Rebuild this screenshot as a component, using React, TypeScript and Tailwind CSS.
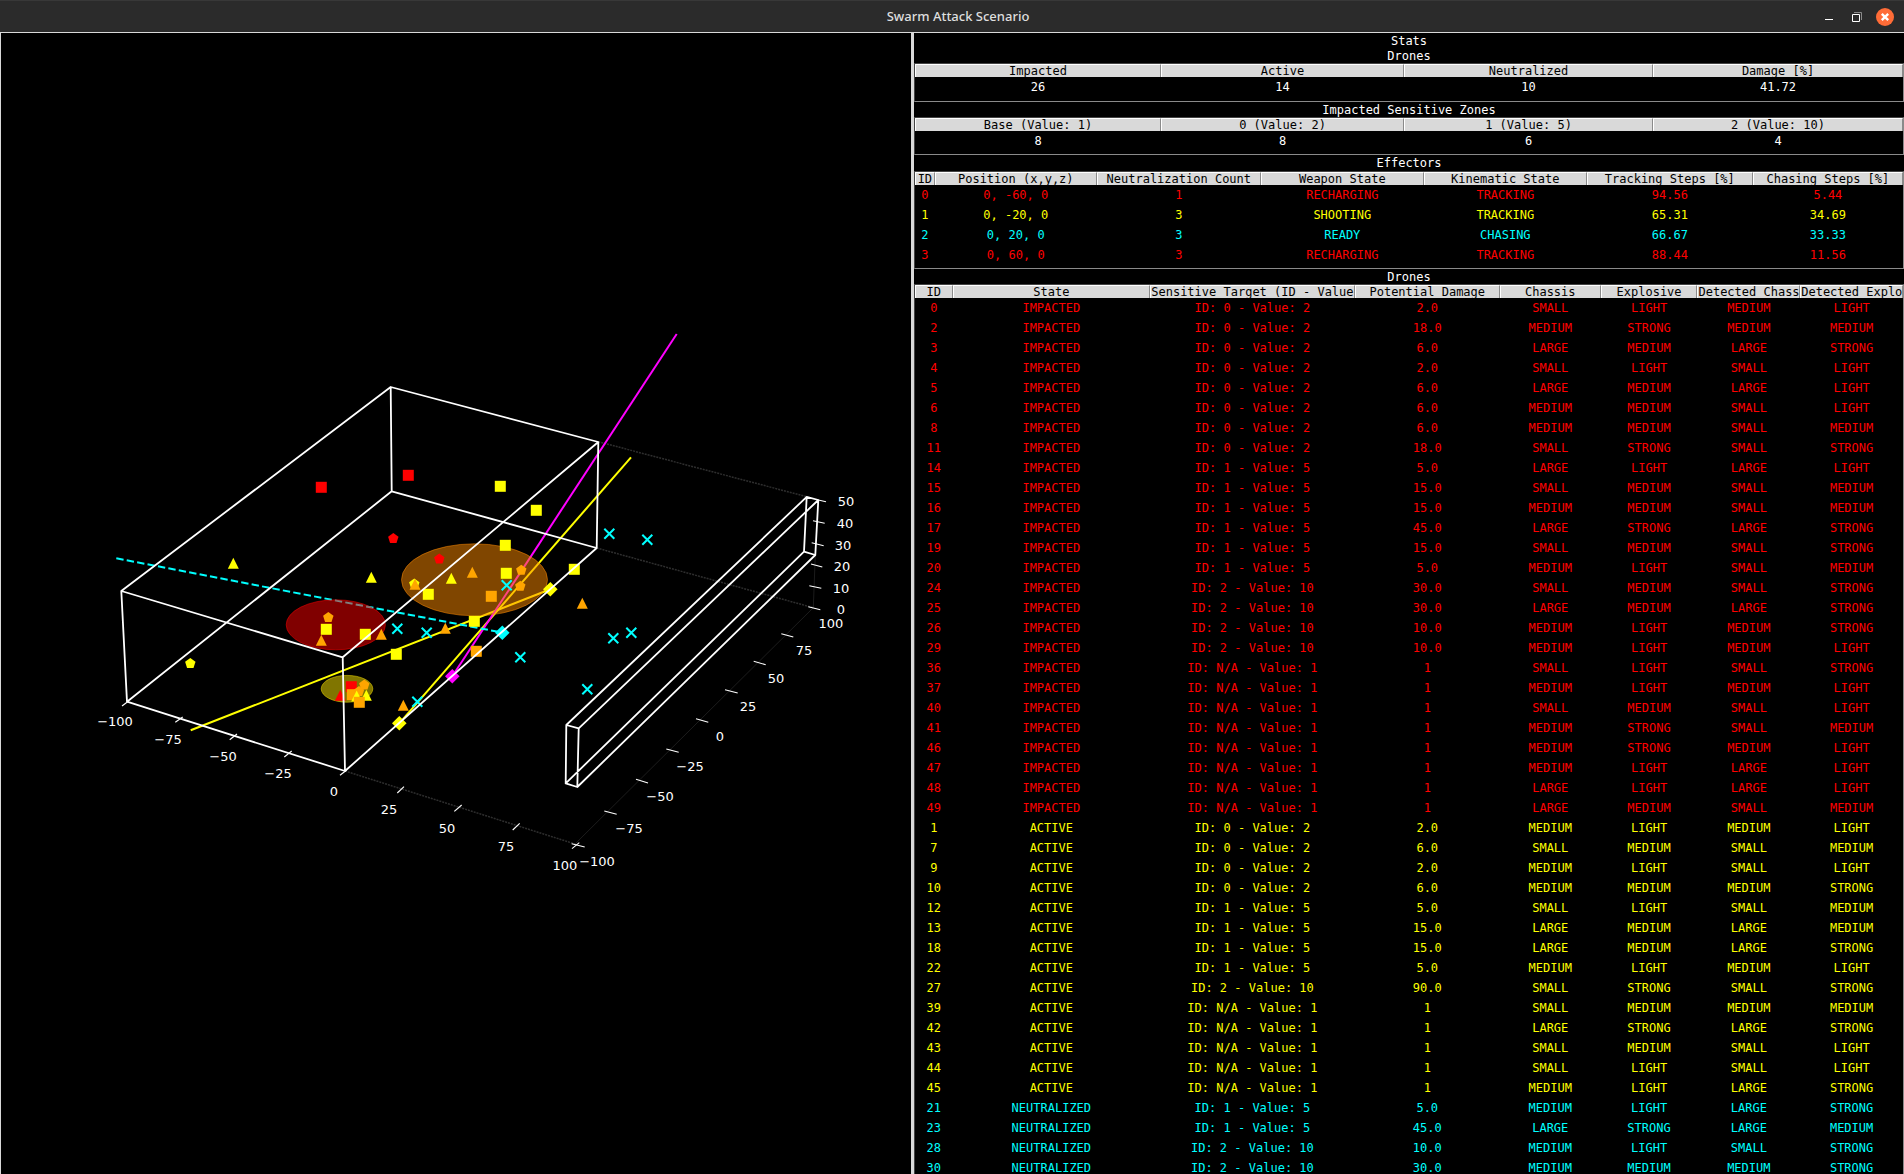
import clsx from "clsx";

type Point = [number, number];

const markerColors = {
  red: "#ff0000",
  yellow: "#ffff00",
  orange: "#ffa500",
  cyan: "#00ffff",
  magenta: "#ff00ff",
};

type MarkerColor = keyof typeof markerColors;
type Shape = "square" | "triangle" | "pentagon" | "diamond" | "cross";

const shapePaths: Record<Shape, string> = {
  square: "M-5.5 -5.5H5.5V5.5H-5.5Z",
  triangle: "M0 -5.5L5.5 5.5H-5.5Z",
  pentagon: "M0 -5.3L5.2 -1.5L3.2 4.8H-3.2L-5.2 -1.5Z",
  diamond: "M0 -7.3L7.3 0L0 7.3L-7.3 0Z",
  cross: "M-5 -5L5 5M-5 5L5 -5",
};

const markers: [Shape, MarkerColor, number, number][] = [
  ["square", "red", 321.3, 487.3],
  ["square", "red", 408.3, 475.3],
  ["square", "yellow", 500.3, 486.3],
  ["square", "yellow", 536.3, 510.3],
  ["square", "yellow", 505.3, 545.3],
  ["square", "yellow", 506.3, 573.3],
  ["square", "yellow", 574.3, 569.3],
  ["square", "yellow", 428.3, 594.3],
  ["square", "orange", 491.3, 596.3],
  ["square", "yellow", 474.3, 621.3],
  ["square", "yellow", 326.3, 629.3],
  ["square", "yellow", 365.3, 634.3],
  ["square", "yellow", 396.3, 654.3],
  ["square", "orange", 476.3, 651.3],
  ["square", "red", 351.3, 686.7],
  ["square", "orange", 352.3, 694.7],
  ["pentagon", "orange", 364.3, 684.7],
  ["pentagon", "orange", 359, 691.3],
  ["pentagon", "red", 393.3, 538.3],
  ["pentagon", "red", 439.3, 558.7],
  ["pentagon", "orange", 521.3, 570],
  ["pentagon", "orange", 520.3, 586],
  ["pentagon", "yellow", 414.3, 583.7],
  ["pentagon", "orange", 328.3, 617.3],
  ["pentagon", "yellow", 190.3, 663.3],
  ["triangle", "yellow", 233.3, 563.3],
  ["triangle", "yellow", 371.3, 577.3],
  ["triangle", "yellow", 451.3, 578.3],
  ["triangle", "orange", 472.3, 572.3],
  ["triangle", "orange", 415, 584.3],
  ["triangle", "orange", 582.3, 603.3],
  ["triangle", "orange", 321.3, 640.3],
  ["triangle", "orange", 381.3, 634.3],
  ["triangle", "orange", 445.3, 628.3],
  ["triangle", "red", 340.3, 695.3],
  ["triangle", "yellow", 356.7, 696],
  ["triangle", "yellow", 366.3, 695.3],
  ["triangle", "orange", 403.3, 705.3],
  ["square", "orange", 359.3, 702.3],
  ["diamond", "yellow", 550.3, 589.3],
  ["diamond", "cyan", 502.3, 632.7],
  ["diamond", "magenta", 452.3, 676.3],
  ["diamond", "yellow", 399.3, 723.3],
  ["cross", "cyan", 609.3, 533.7],
  ["cross", "cyan", 647.3, 539.7],
  ["cross", "cyan", 506.7, 585.3],
  ["cross", "cyan", 397.3, 628.7],
  ["cross", "cyan", 426.7, 632.7],
  ["cross", "cyan", 520.3, 657.3],
  ["cross", "cyan", 587.3, 689.3],
  ["cross", "cyan", 417.3, 701.7],
  ["cross", "cyan", 613.3, 638.3],
  ["cross", "cyan", 631.3, 632.7],
];

// corners: top ring then bottom ring, same winding
const threatBox: Point[] = [
  [390.7, 387], [598.3, 442], [342.7, 657.3], [121.3, 591],
  [391.7, 491.3], [596.7, 548], [345, 771], [127, 701.7],
];
const launchBox: Point[] = [
  [806.7, 496.9], [818.3, 500], [578.7, 728.3], [566.3, 725],
  [804, 551.7], [815.3, 555], [577.3, 787], [565.7, 783.3],
];

const ticks: [number, number, number, number][] = [
  [122, 706, 128.7, 701], [175.3, 722.3, 182.7, 717], [229.7, 739.7, 237, 734],
  [284.3, 757, 291.7, 751], [340, 775.3, 346.7, 770], [397.3, 793, 404, 786.7],
  [454.3, 811.3, 461.7, 805], [512.7, 830, 519.7, 823.3], [572, 848.7, 579.3, 842.7],
  [571.7, 843.7, 584.7, 847], [604.3, 811, 616.7, 814.3], [636, 779.3, 648, 783],
  [666.3, 749, 678.7, 752.3], [696, 718.7, 708.3, 722.3], [725, 689.7, 737.7, 693],
  [753.7, 661.3, 765.7, 664.7], [781.3, 633.7, 793.3, 637], [808.3, 606.7, 820.3, 609.7],
  [809.3, 585.7, 821.3, 588.3], [811, 564, 822.3, 567], [811.7, 542.7, 823.7, 545.7],
  [813, 520.7, 824.7, 523.3], [818.3, 500, 826, 501.7],
];

const tickLabels: [string, number, number][] = [
  ["−100", 115, 726], ["−75", 168, 744], ["−50", 223, 761], ["−25", 278, 778],
  ["0", 334, 796], ["25", 389, 814], ["50", 447, 833], ["75", 506, 851], ["100", 565, 870],
  ["−100", 597, 866], ["−75", 629, 833], ["−50", 660, 801], ["−25", 690, 771],
  ["0", 720, 741], ["25", 748, 711], ["50", 776, 683], ["75", 804, 655], ["100", 831, 628],
  ["0", 841, 614], ["10", 841, 593], ["20", 842, 571], ["30", 843, 550],
  ["40", 845, 528], ["50", 846, 506],
];

function boxPath(c: Point[]) {
  const ring = (p: Point[]) => "M" + p.map((v) => v.join(" ")).join("L") + "Z";
  const pillars = [0, 1, 2, 3].map((i) => `M${c[i].join(" ")}L${c[i + 4].join(" ")}`).join("");
  return ring(c.slice(0, 4)) + ring(c.slice(4)) + pillars;
}

function ScenarioPlot() {
  return (
    <svg
      viewBox="1 33 910 1141"
      className="h-full w-full"
      role="img"
      aria-label="Swarm attack scenario"
      fill="none"
    >
      <g stroke="#2e2e2e" strokeWidth="1.5" strokeDasharray="2 1">
        <path d="M598.3 441.7L806.7 496.7" />
        <path d="M596.7 548L813.3 607.7" />
        <path d="M345 771L575 844" />
      </g>
      <path d="M575 844L813.3 607.7L815.3 555" stroke="#1c1c1c" />
      <g strokeWidth="2">
        <path d="M190.7 730.3L550.3 589.3" stroke="#ffff00" />
        <path d="M631 457.3L399.3 723.3" stroke="#ffff00" />
        <path d="M676.7 334L452.3 676.3" stroke="#ff00ff" />
        <path d="M116.3 558.3L502.7 632.7" stroke="#00ffff" strokeDasharray="7.4 3.2" />
      </g>
      <g fillOpacity="0.5" strokeOpacity="0.5">
        <ellipse cx="474.5" cy="579.8" rx="73" ry="36" fill="#ff8c00" stroke="#ff8c00" />
        <ellipse cx="335.8" cy="624.8" rx="49.6" ry="25" fill="#ff0000" stroke="#ff0000" />
        <ellipse cx="347" cy="688.8" rx="25.8" ry="13.4" fill="#ffea00" stroke="#ffea00" />
      </g>
      {markers.map(([shape, color, x, y], i) => (
        <path
          key={i}
          d={shapePaths[shape]}
          transform={`translate(${x} ${y})`}
          fill={shape === "cross" ? "none" : markerColors[color]}
          stroke={shape === "cross" ? markerColors[color] : "none"}
          strokeWidth="2"
        />
      ))}
      <g stroke="#ffffff" strokeWidth="1.8" strokeLinejoin="round">
        <path d={boxPath(threatBox)} />
        <path d={boxPath(launchBox)} />
      </g>
      <g stroke="#ffffff" strokeWidth="1.1">
        {ticks.map(([x1, y1, x2, y2], i) => (
          <line key={i} x1={x1} y1={y1} x2={x2} y2={y2} />
        ))}
      </g>
      <g fill="#ffffff" textAnchor="middle" className="font-['DejaVu_Sans',sans-serif] text-[13px]">
        {tickLabels.map(([label, x, y], i) => (
          <text key={i} x={x} y={y}>
            {label}
          </text>
        ))}
      </g>
    </svg>
  );
}

type Row = { cells: string[]; className: string };

const rowColors = {
  red: "text-[#ff0000]",
  yellow: "text-[#ffff00]",
  cyan: "text-[#00ffff]",
};

const effectorRows: Row[] = [
  { cells: ["0", "0, -60, 0", "1", "RECHARGING", "TRACKING", "94.56", "5.44"], className: rowColors.red },
  { cells: ["1", "0, -20, 0", "3", "SHOOTING", "TRACKING", "65.31", "34.69"], className: rowColors.yellow },
  { cells: ["2", "0, 20, 0", "3", "READY", "CHASING", "66.67", "33.33"], className: rowColors.cyan },
  { cells: ["3", "0, 60, 0", "3", "RECHARGING", "TRACKING", "88.44", "11.56"], className: rowColors.red },
];

const stateColors: Record<string, string> = {
  IMPACTED: rowColors.red,
  ACTIVE: rowColors.yellow,
  NEUTRALIZED: rowColors.cyan,
};

const droneData = `
0|IMPACTED|0|2|2.0|SMALL|LIGHT|MEDIUM|LIGHT
2|IMPACTED|0|2|18.0|MEDIUM|STRONG|MEDIUM|MEDIUM
3|IMPACTED|0|2|6.0|LARGE|MEDIUM|LARGE|STRONG
4|IMPACTED|0|2|2.0|SMALL|LIGHT|SMALL|LIGHT
5|IMPACTED|0|2|6.0|LARGE|MEDIUM|LARGE|LIGHT
6|IMPACTED|0|2|6.0|MEDIUM|MEDIUM|SMALL|LIGHT
8|IMPACTED|0|2|6.0|MEDIUM|MEDIUM|SMALL|MEDIUM
11|IMPACTED|0|2|18.0|SMALL|STRONG|SMALL|STRONG
14|IMPACTED|1|5|5.0|LARGE|LIGHT|LARGE|LIGHT
15|IMPACTED|1|5|15.0|SMALL|MEDIUM|SMALL|MEDIUM
16|IMPACTED|1|5|15.0|MEDIUM|MEDIUM|SMALL|MEDIUM
17|IMPACTED|1|5|45.0|LARGE|STRONG|LARGE|STRONG
19|IMPACTED|1|5|15.0|SMALL|MEDIUM|SMALL|STRONG
20|IMPACTED|1|5|5.0|MEDIUM|LIGHT|SMALL|MEDIUM
24|IMPACTED|2|10|30.0|SMALL|MEDIUM|SMALL|STRONG
25|IMPACTED|2|10|30.0|LARGE|MEDIUM|LARGE|STRONG
26|IMPACTED|2|10|10.0|MEDIUM|LIGHT|MEDIUM|STRONG
29|IMPACTED|2|10|10.0|MEDIUM|LIGHT|MEDIUM|LIGHT
36|IMPACTED|N/A|1|1|SMALL|LIGHT|SMALL|STRONG
37|IMPACTED|N/A|1|1|MEDIUM|LIGHT|MEDIUM|LIGHT
40|IMPACTED|N/A|1|1|SMALL|MEDIUM|SMALL|LIGHT
41|IMPACTED|N/A|1|1|MEDIUM|STRONG|SMALL|MEDIUM
46|IMPACTED|N/A|1|1|MEDIUM|STRONG|MEDIUM|LIGHT
47|IMPACTED|N/A|1|1|MEDIUM|LIGHT|LARGE|LIGHT
48|IMPACTED|N/A|1|1|LARGE|LIGHT|LARGE|LIGHT
49|IMPACTED|N/A|1|1|LARGE|MEDIUM|SMALL|MEDIUM
1|ACTIVE|0|2|2.0|MEDIUM|LIGHT|MEDIUM|LIGHT
7|ACTIVE|0|2|6.0|SMALL|MEDIUM|SMALL|MEDIUM
9|ACTIVE|0|2|2.0|MEDIUM|LIGHT|SMALL|LIGHT
10|ACTIVE|0|2|6.0|MEDIUM|MEDIUM|MEDIUM|STRONG
12|ACTIVE|1|5|5.0|SMALL|LIGHT|SMALL|MEDIUM
13|ACTIVE|1|5|15.0|LARGE|MEDIUM|LARGE|MEDIUM
18|ACTIVE|1|5|15.0|LARGE|MEDIUM|LARGE|STRONG
22|ACTIVE|1|5|5.0|MEDIUM|LIGHT|MEDIUM|LIGHT
27|ACTIVE|2|10|90.0|SMALL|STRONG|SMALL|STRONG
39|ACTIVE|N/A|1|1|SMALL|MEDIUM|MEDIUM|MEDIUM
42|ACTIVE|N/A|1|1|LARGE|STRONG|LARGE|STRONG
43|ACTIVE|N/A|1|1|SMALL|MEDIUM|SMALL|LIGHT
44|ACTIVE|N/A|1|1|SMALL|LIGHT|SMALL|LIGHT
45|ACTIVE|N/A|1|1|MEDIUM|LIGHT|LARGE|STRONG
21|NEUTRALIZED|1|5|5.0|MEDIUM|LIGHT|LARGE|STRONG
23|NEUTRALIZED|1|5|45.0|LARGE|STRONG|LARGE|MEDIUM
28|NEUTRALIZED|2|10|10.0|MEDIUM|LIGHT|SMALL|STRONG
30|NEUTRALIZED|2|10|30.0|MEDIUM|MEDIUM|MEDIUM|STRONG
`;

const droneRows: Row[] = droneData
  .trim()
  .split("\n")
  .map((line) => {
    const [id, state, target, value, ...rest] = line.split("|");
    return {
      cells: [id, state, `ID: ${target} - Value: ${value}`, ...rest],
      className: stateColors[state],
    };
  });

type StatsTableProps = {
  title: string;
  columns: { name: string; className: string }[];
  rows: Row[];
  className?: string;
  titleClassName?: string;
};

function StatsTable({ title, columns, rows, className, titleClassName = "h-[15px]" }: StatsTableProps) {
  return (
    <section>
      <h2 className={clsx("text-center leading-[17px] text-white", titleClassName)}>{title}</h2>
      <div className={clsx("border border-b-[#8a8a8a] border-l-[#444] border-r-[#8a8a8a] border-t-[#444]", className)}>
        <table aria-label={title} className="w-full table-fixed border-collapse">
          <thead>
            <tr>
              {columns.map((column) => (
                <th key={column.name} scope="col" className={clsx("h-[13px] p-0 font-normal", column.className)}>
                  <div className="flex h-[13px] items-center overflow-hidden border-l border-r border-t border-l-white border-r-[#8a8a8a] border-t-white bg-[#d9d9d9] leading-3 whitespace-pre text-black">
                    <span className="mx-auto">{column.name}</span>
                  </div>
                </th>
              ))}
            </tr>
          </thead>
          <tbody>
            {rows.map((row) => (
              <tr key={row.cells[0]} className={clsx("h-5", row.className)}>
                {row.cells.map((cell, i) => (
                  <td key={i} className="p-0 text-center leading-5 whitespace-nowrap">
                    {cell}
                  </td>
                ))}
              </tr>
            ))}
          </tbody>
        </table>
      </div>
    </section>
  );
}

function TitleBar() {
  return (
    <header className="flex h-8 shrink-0 items-center border-t border-[#383838] bg-[#2b2b2b] pr-[10px]">
      <div className="w-24" />
      <h1 className="flex-1 text-center font-['Noto_Sans',sans-serif] text-[13px] font-medium text-[#dedede]">
        Swarm Attack Scenario
      </h1>
      <div className="flex items-center gap-[10px]">
        <button type="button" aria-label="Minimize" className="flex h-[18px] w-[18px] items-center justify-center">
          <svg width="18" height="18" viewBox="0 0 18 18">
            <path d="M5 11.5H13" stroke="#ffffff" />
          </svg>
        </button>
        <button type="button" aria-label="Restore" className="flex h-[18px] w-[18px] items-center justify-center">
          <svg width="18" height="18" viewBox="0 0 18 18" fill="none">
            <path d="M6 4.5H13.5V12" stroke="#8a8a8a" />
            <path d="M4.5 6.5H11.5V13.5H4.5Z" stroke="#ffffff" />
          </svg>
        </button>
        <button
          type="button"
          aria-label="Close"
          className="flex h-[18px] w-[18px] items-center justify-center rounded-full bg-[#ff6c37]"
        >
          <svg width="18" height="18" viewBox="0 0 18 18">
            <path d="M5.8 5.8L12.2 12.2M12.2 5.8L5.8 12.2" stroke="#ffffff" strokeWidth="2.4" />
          </svg>
        </button>
      </div>
    </header>
  );
}

export default function App() {
  return (
    <div className="flex h-screen flex-col overflow-hidden bg-black">
      <TitleBar />
      <div className="flex min-h-0 flex-1 border-t border-[#d9d9d9]">
        <main className="min-w-0 flex-[910] border-l border-[#d9d9d9]">
          <ScenarioPlot />
        </main>
        <aside className="min-w-0 flex-[990] overflow-hidden border-l-[3px] border-[#d9d9d9] font-['DejaVu_Sans_Mono',monospace] text-[12px]">
          <p className="h-[15px] text-center leading-[17px] text-white">Stats</p>
          <StatsTable
            title="Drones"
            className="pb-1"
            columns={[
              { name: "Impacted", className: "w-[24.9%]" },
              { name: "Active", className: "w-[24.6%]" },
              { name: "Neutralized", className: "w-[25.2%]" },
              { name: "Damage [%]", className: "w-[25.3%]" },
            ]}
            rows={[{ cells: ["26", "14", "10", "41.72"], className: "text-white" }]}
          />
          <StatsTable
            title="Impacted Sensitive Zones"
            className="pb-[3px]"
            columns={[
              { name: "Base (Value: 1)", className: "w-[24.9%]" },
              { name: "0 (Value: 2)", className: "w-[24.6%]" },
              { name: "1 (Value: 5)", className: "w-[25.2%]" },
              { name: "2 (Value: 10)", className: "w-[25.3%]" },
            ]}
            rows={[{ cells: ["8", "8", "6", "4"], className: "text-white" }]}
          />
          <StatsTable
            title="Effectors"
            titleClassName="h-4"
            className="pb-[3px]"
            columns={[
              { name: "ID", className: "w-[2%]" },
              { name: "Position (x,y,z)", className: "w-[16.4%]" },
              { name: "Neutralization Count", className: "w-[16.6%]" },
              { name: "Weapon State", className: "w-[16.5%]" },
              { name: "Kinematic State", className: "w-[16.5%]" },
              { name: "Tracking Steps [%]", className: "w-[16.8%]" },
              { name: "Chasing Steps [%]", className: "w-[15.2%]" },
            ]}
            rows={effectorRows}
          />
          <StatsTable
            title="Drones"
            columns={[
              { name: "ID", className: "w-[3.8%]" },
              { name: "State", className: "w-[20%]" },
              { name: "Sensitive Target (ID - Value", className: "w-[20.7%]" },
              { name: "Potential Damage", className: "w-[14.7%]" },
              { name: "Chassis", className: "w-[10.2%]" },
              { name: "Explosive", className: "w-[9.8%]" },
              { name: "Detected Chassis", className: "w-[10.4%]" },
              { name: "Detected Explosive", className: "w-[10.4%]" },
            ]}
            rows={droneRows}
          />
        </aside>
      </div>
    </div>
  );
}
